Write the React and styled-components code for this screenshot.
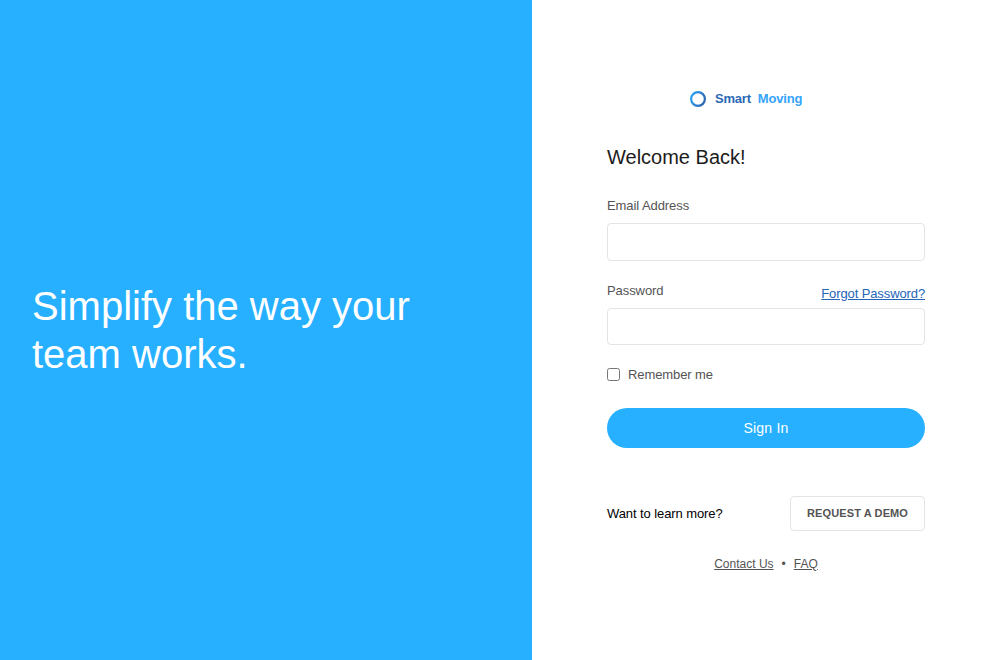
import React from "react";
import styled, { createGlobalStyle } from "styled-components";

const GlobalStyle = createGlobalStyle`
  * { box-sizing: border-box; }
  body { margin: 0; background: #fff; font-family: "Liberation Sans", Arial, sans-serif; }
`;

const Page = styled.div`
  display: flex;
  height: 660px;
`;

const Hero = styled.section`
  width: 532px;
  padding: 0 32px;
  display: flex;
  align-items: center;
  background: #26b0ff;
`;

const Headline = styled.h1`
  margin: 0;
  max-width: 420px;
  color: #fff;
  font-size: 40px;
  font-weight: 400;
  line-height: 48px;
`;

const Panel = styled.main`
  width: 318px;
  margin-left: 75px;
  padding-top: 88px;
`;

const Brand = styled.div`
  display: flex;
  align-items: center;
  height: 21px;
  padding-left: 83px;
  font-size: 13px;
  font-weight: 700;
`;

const BrandWord = styled.span`
  margin-left: ${(p) => p.$gap}px;
  color: ${(p) => p.$color};
  letter-spacing: -0.2px;
`;

const Title = styled.h2`
  margin: 36px 0 0;
  color: #1c1c1c;
  font-size: 20px;
  font-weight: 400;
  line-height: 24px;
`;

const LabelRow = styled.div`
  display: flex;
  justify-content: space-between;
  height: 17px;
  margin-top: ${(p) => p.$top}px;
`;

const Label = styled.label`
  color: #545454;
  font-size: 13px;
  line-height: 17px;
  letter-spacing: -0.08px;
`;

const ForgotLink = styled.a`
  color: #2465b8;
  font-size: 13px;
  line-height: 17px;
  letter-spacing: -0.11px;
  margin-top: 3px;
  text-decoration: underline;
`;

const Field = styled.input`
  display: block;
  width: 100%;
  height: ${(p) => p.$height}px;
  margin-top: 9px;
  padding: 0 12px;
  border: 1px solid #e4e4e4;
  border-radius: 4px;
  background: #fff;
`;

const Remember = styled.label`
  display: flex;
  align-items: center;
  gap: 8px;
  height: 17px;
  margin-top: 21px;
  color: #545454;
  font-size: 13px;
  letter-spacing: -0.1px;
`;

const Checkbox = styled.input`
  width: 13px;
  height: 13px;
  margin: 0;
`;

const SignIn = styled.button`
  display: block;
  width: 100%;
  height: 40px;
  margin-top: 25px;
  border: 0;
  border-radius: 20px;
  background: #26b0ff;
  color: #fff;
  font: 400 14px "Liberation Sans", Arial, sans-serif;
  letter-spacing: 0.2px;
`;

const LearnMore = styled.div`
  display: flex;
  align-items: center;
  justify-content: space-between;
  margin-top: 48px;
  color: #000;
  font-size: 13px;
  letter-spacing: -0.09px;
`;

const DemoButton = styled.button`
  width: 135px;
  height: 35px;
  padding: 0 0 2px;
  border: 1px solid #e4e4e4;
  border-radius: 4px;
  background: #fff;
  color: #545454;
  font: 700 11px "Liberation Sans", Arial, sans-serif;
  letter-spacing: 0.12px;
`;

const Footer = styled.footer`
  display: flex;
  justify-content: center;
  gap: 8px;
  margin-top: 25px;
  color: #545454;
  font-size: 12px;
  line-height: 16px;
`;

const FooterLink = styled.a`
  text-decoration: underline;
`;

function Ring() {
  return (
    <svg width="16" height="16" viewBox="0 0 16 16" fill="none">
      <defs>
        <linearGradient id="ring" x1="0" y1="0" x2="1" y2="0.4">
          <stop offset="0" stopColor="#2ba9f5" />
          <stop offset="1" stopColor="#2b68b8" />
        </linearGradient>
      </defs>
      <circle cx="8" cy="8" r="6.9" stroke="url(#ring)" strokeWidth="2.2" />
    </svg>
  );
}

export default function App() {
  return (
    <>
      <GlobalStyle />
      <Page>
        <Hero>
          <Headline>Simplify the way your team works.</Headline>
        </Hero>
        <Panel>
          <Brand>
            <Ring />
            <BrandWord $gap={9} $color="#2b68b5">Smart</BrandWord>
            <BrandWord $gap={7} $color="#35a3fa">Moving</BrandWord>
          </Brand>
          <Title>Welcome Back!</Title>
          <LabelRow $top={28}>
            <Label htmlFor="email">Email Address</Label>
          </LabelRow>
          <Field id="email" type="email" $height={38} />
          <LabelRow $top={21}>
            <Label htmlFor="password">Password</Label>
            <ForgotLink>Forgot Password?</ForgotLink>
          </LabelRow>
          <Field id="password" type="password" $height={37} />
          <Remember>
            <Checkbox type="checkbox" />
            Remember me
          </Remember>
          <SignIn type="button">Sign In</SignIn>
          <LearnMore>
            <span>Want to learn more?</span>
            <DemoButton type="button">REQUEST A DEMO</DemoButton>
          </LearnMore>
          <Footer>
            <FooterLink>Contact Us</FooterLink>
            <span>•</span>
            <FooterLink>FAQ</FooterLink>
          </Footer>
        </Panel>
      </Page>
    </>
  );
}
